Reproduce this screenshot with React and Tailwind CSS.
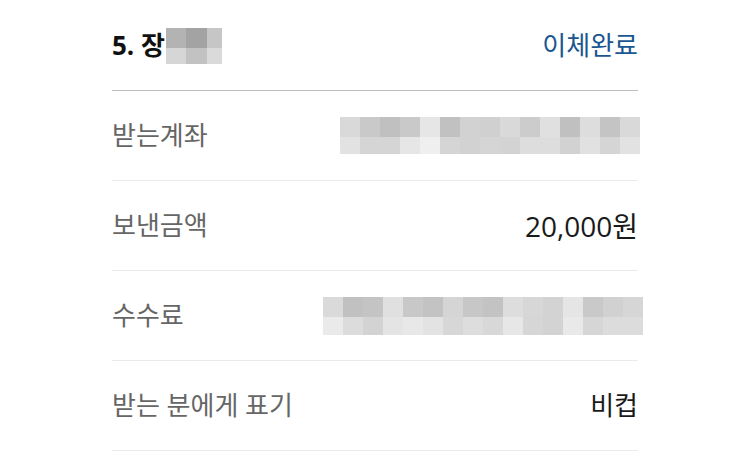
import React from 'react';

const font = { fontFamily: '"Open Sans", "Noto Sans CJK KR", sans-serif' };

function Mosaic({ widths, heights, colors }) {
    return (
        <div className="flex flex-col">
            {colors.map((row, r) => (
                <div key={r} className="flex">
                    {row.map((c, i) => (
                        <div key={i} style={{ width: widths[i], height: heights[r], backgroundColor: '#' + c.repeat(3) }} />
                    ))}
                </div>
            ))}
        </div>
    );
}

const headerBlur = {
    widths: [20, 21, 15],
    heights: [20, 16],
    colors: [
        ['b3', 'a3', 'c6'],
        ['d6', 'c2', 'da'],
    ],
};

const accountBlur = {
    widths: Array(15).fill(20),
    heights: [20, 17],
    colors: [
        ['d9', 'c9', 'c0', 'c9', 'e6', 'c1', 'd2', 'd0', 'd9', 'cc', 'e0', 'c0', 'dd', 'c4', 'd9'],
        ['e2', 'd5', 'd5', 'e6', 'ef', 'd5', 'd2', 'd5', 'd3', 'dd', 'dd', 'd2', 'e1', 'd5', 'e2'],
    ],
};

const feeBlur = {
    widths: Array(16).fill(20),
    heights: [20, 18],
    colors: [
        ['da', 'c1', 'c4', 'e0', 'c8', 'c3', 'd5', 'c7', 'c3', 'dd', 'd7', 'd3', 'e5', 'c9', 'd1', 'd6'],
        ['ea', 'dc', 'd3', 'e4', 'e8', 'e3', 'd7', 'dd', 'd8', 'e7', 'd6', 'd3', 'e9', 'd6', 'dc', 'dc'],
    ],
};

function Row({ label, children }) {
    return (
        <div className="h-[90px] flex items-center justify-between border-b border-[#ebebeb]">
            <span className="text-[26px] text-[#666666]">{label}</span>
            {children}
        </div>
    );
}

export default function App() {
    return (
        <div className="w-[750px] h-[454px] bg-white overflow-hidden" style={font}>
            <div className="ml-[112px] w-[526px]">
                {/* Header */}
                <div className="h-[91px] flex items-center justify-between border-b border-[#bdbdbd]">
                    <div className="flex items-center">
                        <span className="text-[26px] font-bold text-[#111111]">5. 장</span>
                        <div className="ml-[1px] mt-[2px]">
                            <Mosaic {...headerBlur} />
                        </div>
                    </div>
                    <span className="text-[26px] text-[#1a5790]">이체완료</span>
                </div>

                <Row label="받는계좌">
                    <div className="mr-[-2px]">
                        <Mosaic {...accountBlur} />
                    </div>
                </Row>
                <Row label="보낸금액">
                    <span className="text-[28px] text-[#1a1a1a]">20,000원</span>
                </Row>
                <Row label="수수료">
                    <div className="mr-[-5px]">
                        <Mosaic {...feeBlur} />
                    </div>
                </Row>
                <Row label="받는 분에게 표기">
                    <span className="text-[26px] text-[#1a1a1a]">비컵</span>
                </Row>
            </div>
        </div>
    );
}
